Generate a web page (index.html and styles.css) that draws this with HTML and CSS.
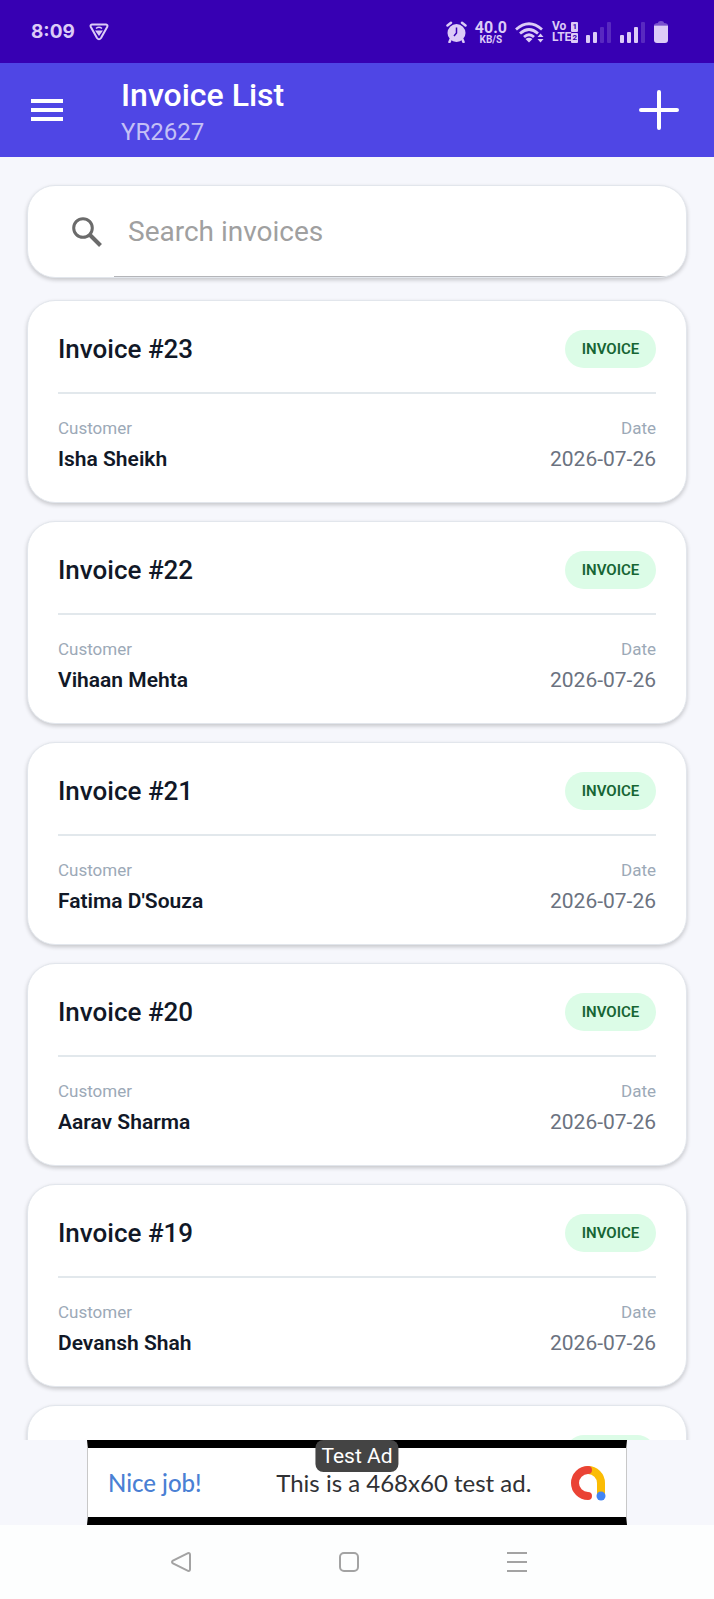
FILE: index.html
```html
<!doctype html>
<html lang="en">
    <head>
        <meta charset="UTF-8" />
        <meta name="viewport" content="width=device-width, initial-scale=1.0" />
        <title>Invoice List</title>
        <link rel="stylesheet" href="styles.css">
    </head>
    <body>
        <div class="status-bar">
            <span class="clock">8:09</span>
            <svg class="shield" width="20" height="18" viewBox="0 0 20 18" fill="none" stroke="currentColor" stroke-width="2" stroke-linejoin="round">
                <path d="M3 1.5h14q2 .3 1.3 2.3L12 15q-2 2.600-4 0L1.700 3.800Q1 1.800 3 1.500Z" />
                <path d="M6 7.500h8L10 13Z" fill="currentColor" stroke="none" />
                <path d="M7 5.500q3-2.500 6 0" stroke-width="1.500" />
            </svg>
            <div class="status-icons">
                <svg width="21" height="22" viewBox="0 0 21 22">
                    <circle cx="10.500" cy="12" r="9" fill="currentColor" />
                    <path d="M1.500 4.500 5 1.800M19.500 4.500 16 1.800M4.500 18.500 3.500 21M16.500 18.500l1 2.500" stroke="currentColor" stroke-width="2.500" stroke-linecap="round" />
                    <path d="M10.500 6.500V12L8 15" fill="none" stroke="#3700b3" stroke-width="1.500" />
                </svg>
                <div class="speed">
                    <span class="speed-value">40.0</span>
                    <span class="speed-unit">KB/S</span>
                </div>
                <svg width="29" height="21" viewBox="0 0 29 21">
                    <g fill="none" stroke="currentColor" stroke-width="2.800">
                        <path d="M1 7.500Q14 -4 27 7.500" />
                        <path d="M5 11.500Q14 3.500 23 11.500" />
                        <path d="M9 15Q14 10.500 19 15" />
                    </g>
                    <path d="M10.500 17q3.500-2.600 7 0L14 20.500ZM22.500 15l3-3.500 3 3.500ZM22.500 17l3 3.500 3-3.500Z" fill="currentColor" />
                </svg>
                <div class="volte">
                    <span>Vo <i>1</i></span>
                    <span>LTE<i>2</i></span>
                </div>
                <svg width="26" height="21" viewBox="0 0 26 21" fill="currentColor">
                    <rect y="13" width="4" height="8" rx="1" />
                    <rect x="7" y="10" width="4" height="11" rx="1" />
                    <rect x="14" y="5" width="4" height="16" rx="1" opacity=".2" />
                    <rect x="21" y="0" width="4" height="21" rx="1" opacity=".2" />
                </svg>
                <svg width="26" height="21" viewBox="0 0 26 21" fill="currentColor">
                    <rect y="13" width="4" height="8" rx="1" />
                    <rect x="7" y="10" width="4" height="11" rx="1" />
                    <rect x="14" y="5" width="4" height="16" rx="1" />
                    <rect x="21" y="0" width="4" height="21" rx="1" opacity=".2" />
                </svg>
                <svg width="14" height="22" viewBox="0 0 14 22" fill="currentColor">
                    <path d="M4 2q0-2 3-2t3 2q4 0 4 2.500H0Q0 2 4 2Z" opacity=".4" />
                    <path d="M0 4.500h14V19q0 3-3 3H3q-3 0-3-3Z" />
                </svg>
            </div>
        </div>

        <header class="app-bar">
            <button class="icon-button" type="button" aria-label="Menu">
                <svg width="32" height="22" viewBox="0 0 32 22" fill="currentColor">
                    <path d="M0 0h32v4H0ZM0 9h32v4H0ZM0 18h32v4H0Z" />
                </svg>
            </button>
            <div class="titles">
                <h1>Invoice List</h1>
                <p>YR2627</p>
            </div>
            <button class="icon-button" type="button" aria-label="Add invoice">
                <svg width="40" height="40" viewBox="0 0 40 40" stroke="currentColor" stroke-width="4" stroke-linecap="round">
                    <path d="M20 2v36M2 20h36" />
                </svg>
            </button>
        </header>

        <main class="content">
            <label class="search">
                <svg width="30" height="30" viewBox="0 0 30 30" fill="none" stroke="currentColor" stroke-width="3">
                    <circle cx="11" cy="11" r="9.300" />
                    <path d="M17.500 17.500 28.500 28.500" stroke-width="4" />
                </svg>
                <input type="search" placeholder="Search invoices" aria-label="Search invoices" />
            </label>

            <article class="card">
                <div class="card-head">
                    <h2>Invoice #23</h2>
                    <span class="badge">INVOICE</span>
                </div>
                <dl class="card-body">
                    <div>
                        <dt>Customer</dt>
                        <dd class="customer">Isha Sheikh</dd>
                    </div>
                    <div class="date">
                        <dt>Date</dt>
                        <dd>2026-07-26</dd>
                    </div>
                </dl>
            </article>

            <article class="card">
                <div class="card-head">
                    <h2>Invoice #22</h2>
                    <span class="badge">INVOICE</span>
                </div>
                <dl class="card-body">
                    <div>
                        <dt>Customer</dt>
                        <dd class="customer">Vihaan Mehta</dd>
                    </div>
                    <div class="date">
                        <dt>Date</dt>
                        <dd>2026-07-26</dd>
                    </div>
                </dl>
            </article>

            <article class="card">
                <div class="card-head">
                    <h2>Invoice #21</h2>
                    <span class="badge">INVOICE</span>
                </div>
                <dl class="card-body">
                    <div>
                        <dt>Customer</dt>
                        <dd class="customer">Fatima D'Souza</dd>
                    </div>
                    <div class="date">
                        <dt>Date</dt>
                        <dd>2026-07-26</dd>
                    </div>
                </dl>
            </article>

            <article class="card">
                <div class="card-head">
                    <h2>Invoice #20</h2>
                    <span class="badge">INVOICE</span>
                </div>
                <dl class="card-body">
                    <div>
                        <dt>Customer</dt>
                        <dd class="customer">Aarav Sharma</dd>
                    </div>
                    <div class="date">
                        <dt>Date</dt>
                        <dd>2026-07-26</dd>
                    </div>
                </dl>
            </article>

            <article class="card">
                <div class="card-head">
                    <h2>Invoice #19</h2>
                    <span class="badge">INVOICE</span>
                </div>
                <dl class="card-body">
                    <div>
                        <dt>Customer</dt>
                        <dd class="customer">Devansh Shah</dd>
                    </div>
                    <div class="date">
                        <dt>Date</dt>
                        <dd>2026-07-26</dd>
                    </div>
                </dl>
            </article>

            <!-- next row, still below the fold -->
            <article class="card">
                <div class="card-head">
                    <h2></h2>
                    <span class="badge"></span>
                </div>
            </article>
        </main>

        <aside class="ad">
            <span class="ad-tag">Test Ad</span>
            <strong>Nice job!</strong>
            <span class="ad-text">This is a 468x60 test ad.</span>
            <svg width="36" height="36" viewBox="0 0 36 36" fill="none" stroke-width="8" stroke-linecap="round">
                <path d="M18 5A13 13 0 0 1 31 18V30" stroke="#fbbc04" />
                <path d="M18 5A13 13 0 0 0 18 31" stroke="#ea4335" />
                <circle cx="31" cy="31" r="4.500" fill="#4285f4" />
            </svg>
        </aside>

        <nav class="nav-bar">
            <button type="button" aria-label="Back">
                <svg width="20" height="20" viewBox="0 0 20 20">
                    <path d="M17 1.200 2 8.500q-2 1.500 0 3L17 18.800q2 .5 2-1.500V2.700q0-2-2-1.500Z" />
                </svg>
            </button>
            <button type="button" aria-label="Home">
                <svg width="20" height="20" viewBox="0 0 20 20">
                    <rect x="1" y="1" width="18" height="18" rx="4" />
                </svg>
            </button>
            <button type="button" aria-label="Recent apps">
                <svg width="20" height="20" viewBox="0 0 20 20">
                    <path d="M0 1h20M0 10h20M0 19h20" />
                </svg>
            </button>
        </nav>
    </body>
</html>
```

FILE: styles.css
```css
* {
    box-sizing: border-box;
}

body {
    margin: 0;
    height: 100vh;
    display: flex;
    flex-direction: column;
    background: #f6f7fc;
    color: #111827;
    font-family: Roboto, sans-serif;
}

h1,
h2,
p,
dl,
dd {
    margin: 0;
}

button {
    padding: 0;
    border: 0;
    background: none;
    color: inherit;
}

svg {
    display: block;
    flex: none;
}

/* status bar */
.status-bar {
    flex: none;
    height: 63px;
    padding: 1px 46px 0 31px;
    display: flex;
    align-items: center;
    background: #3700b3;
    color: #dccbf7;
}

.clock {
    font: 700 19px/24px Inter, sans-serif;
}

.shield {
    margin-left: 14px;
}

.status-icons {
    margin-left: auto;
    display: flex;
    align-items: center;
    gap: 8px;
}

.speed,
.volte {
    display: flex;
    flex-direction: column;
    align-items: center;
    font-weight: 700;
}

.speed-value {
    font-size: 16px;
    line-height: 14px;
}

.speed-unit {
    font-size: 10px;
    line-height: 9px;
}

.volte span {
    width: 26px;
    display: flex;
    justify-content: space-between;
    align-items: center;
    font-size: 12px;
    line-height: 11px;
}

.volte i {
    padding: 0 1px;
    border-radius: 1px;
    background: currentColor;
    font-size: 8px;
    font-style: normal;
    line-height: 10px;
    -webkit-text-fill-color: #3700b3;
}

/* app bar */
.app-bar {
    flex: none;
    height: 94px;
    padding: 0 35px 0 31px;
    display: flex;
    align-items: center;
    background: #4f46e5;
    color: #fff;
}

.titles {
    flex: 1;
    margin-left: 58px;
    padding-top: 6px;
}

.titles h1 {
    font-size: 32px;
    font-weight: 500;
    line-height: 38px;
}

.titles p {
    font-size: 24px;
    line-height: 36px;
    color: #c4c0f6;
}

/* list */
.content {
    flex: 1;
    min-height: 0;
    padding: 28px 27px 0;
    display: flex;
    flex-direction: column;
    gap: 18px;
    overflow: hidden;
}

.search,
.card {
    flex: none;
    border: 1px solid #e2e6ec;
    border-radius: 28px;
    background: #fff;
    box-shadow: 0 2px 4px rgba(0, 0, 0, 0.2);
}

.search {
    height: 93px;
    margin-bottom: 4px;
    padding-left: 44px;
    display: flex;
    align-items: center;
    gap: 12px;
    color: #6b6b6b;
    overflow: hidden;
}

.search input {
    flex: 1;
    min-width: 0;
    height: 90px;
    margin-right: 16px;
    padding: 0 14px;
    border: 0;
    border-bottom: 1px solid #b4b5b9;
    outline: 0;
    background: none;
    font: 28px Roboto, sans-serif;
    color: #111827;
}

.search input::placeholder {
    color: #a0a0a0;
}

.card {
    min-height: 203px;
    padding: 29px 30px 27px;
}

.card-head {
    padding-bottom: 24px;
    border-bottom: 2px solid #e2e8ec;
    display: flex;
    justify-content: space-between;
    align-items: center;
}

.card-head h2 {
    font-size: 26px;
    font-weight: 500;
    line-height: 38px;
}

.badge {
    min-width: 91px;
    height: 38px;
    border-radius: 19px;
    background: #dcfce7;
    color: #166534;
    font-size: 15px;
    font-weight: 600;
    line-height: 38px;
    text-align: center;
}

.card-body {
    padding-top: 24px;
    display: flex;
    justify-content: space-between;
}

.card-body dt {
    margin-bottom: 7px;
    font-size: 17px;
    line-height: 20px;
    color: #9ca9b7;
}

.card-body dd {
    font-size: 21px;
    line-height: 28px;
    color: #6b7280;
}

.card-body .customer {
    font-weight: 600;
    color: #111827;
}

.date {
    text-align: right;
}

/* ad banner */
.ad {
    position: relative;
    flex: none;
    align-self: center;
    width: 540px;
    max-width: 100%;
    height: 85px;
    padding: 0 20px;
    display: flex;
    align-items: center;
    justify-content: space-between;
    border: 1px solid #c8c8c8;
    border-width: 8px 1px;
    border-top-color: #000;
    border-bottom-color: #000;
    background: #fff;
    font-family: Lato, sans-serif;
    font-size: 24px;
}

.ad strong {
    font-weight: 500;
    color: #4a80d4;
}

.ad-text {
    margin-left: 36px;
    color: #303134;
}

.ad-tag {
    position: absolute;
    top: -8px;
    left: 50%;
    transform: translateX(-50%);
    padding: 1px 6px 0;
    border-radius: 8px;
    background: #444;
    color: #fff;
    font: 21px/31px Roboto, sans-serif;
    white-space: nowrap;
}

/* system navigation */
.nav-bar {
    flex: none;
    height: 74px;
    padding-right: 16px;
    display: grid;
    grid-template-columns: repeat(3, 24%);
    justify-content: center;
    background: #fdfefe;
}

.nav-bar button {
    display: flex;
    align-items: center;
    justify-content: center;
}

.nav-bar svg {
    fill: none;
    stroke: #a3a3a3;
    stroke-width: 2;
}
```
